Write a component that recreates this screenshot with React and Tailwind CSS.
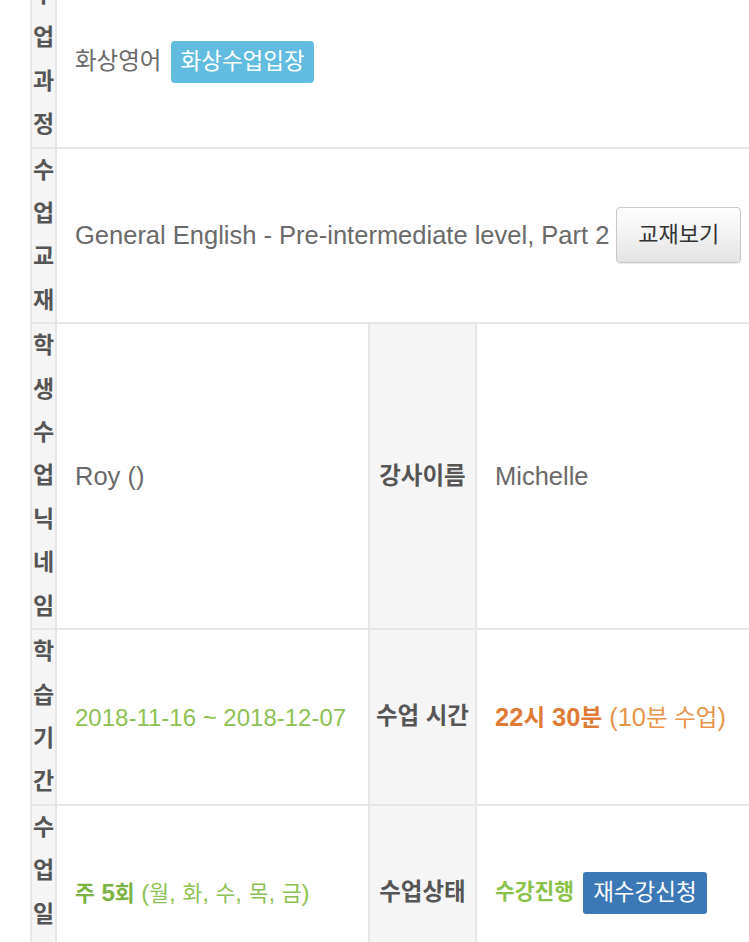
const K = ({ children, className = "" }) => (
  <span className={"text-[23.5px] " + className}>{children}</span>
);

const S = ({ children, className = "" }) => (
  <span className={"text-[21.5px] " + className}>{children}</span>
);

function Th({ children }) {
  return (
    <th className="border-2 border-[#e6e6e6] bg-[#f5f5f5] p-0 text-center align-middle font-bold text-[23px] leading-[43.4px] text-[#555] break-all">
      {children}
    </th>
  );
}

function Label({ children }) {
  return (
    <th className="border-2 border-[#e6e6e6] bg-[#f5f5f5] p-0 text-center align-middle font-bold text-[23.5px] text-[#555] whitespace-nowrap">
      {children}
    </th>
  );
}

function Td({ children, colSpan }) {
  return (
    <td colSpan={colSpan} className="border-2 border-[#e6e6e6] pl-[18px] pr-2 align-middle">
      {children}
    </td>
  );
}

export default function App() {
  return (
    <div className="w-[749px] h-[942px] overflow-hidden bg-white font-['Liberation_Sans','Noto_Sans_CJK_KR',sans-serif] text-[25.5px] text-[#6a6a6a]">
      <table className="table-fixed border-collapse ml-[30px] -mt-[29px] w-[760px]">
        <colgroup>
          <col className="w-[25px]" />
          <col className="w-[313px]" />
          <col className="w-[107px]" />
          <col />
        </colgroup>
        <tbody>
          <tr>
            <Th>수업과정</Th>
            <Td colSpan={3}>
              <div className="flex items-center gap-[10px] pt-[4px]">
                <K>화상영어</K>
                <span className="rounded-[4px] bg-[#62bcdf] px-[9px] py-[5px] text-[22.5px] leading-[32px] text-white">
                  화상수업입장
                </span>
              </div>
            </Td>
          </tr>
          <tr>
            <Th>수업교재</Th>
            <Td colSpan={3}>
              <div className="flex items-center gap-[7px] whitespace-nowrap">
                <span>General English - Pre-intermediate level, Part 2</span>
                <span className="rounded-[4px] border border-[#c8c8c8] bg-gradient-to-b from-white to-[#e4e4e4] px-[21px] py-[12px] text-[22px] leading-[30px] text-[#333] shadow-[0_1px_1px_rgba(0,0,0,0.08)]">
                  교재보기
                </span>
              </div>
            </Td>
          </tr>
          <tr>
            <Th>학생수업닉네임</Th>
            <Td>Roy ()</Td>
            <Label>강사이름</Label>
            <Td>Michelle</Td>
          </tr>
          <tr>
            <Th>학습기간</Th>
            <Td>
              <span className="text-[24px] text-[#8dc153]">2018-11-16 ~ 2018-12-07</span>
            </Td>
            <Label>수업 시간</Label>
            <Td>
              <span className="whitespace-nowrap">
                <span className="font-bold text-[#df7b34]">
                  22<K>시</K> 30<K>분</K>
                </span>{" "}
                <span className="text-[#e8954c]">
                  (10<K>분 수업</K>)
                </span>
              </span>
            </Td>
          </tr>
          <tr>
            <Th>수업일자</Th>
            <Td>
              <span className="whitespace-nowrap text-[24px]">
                <span className="font-bold text-[#7cb342]">
                  <S>주</S> 5<S>회</S>
                </span>{" "}
                <span className="text-[#8dc153]">
                  (<S>월</S>, <S>화</S>, <S>수</S>, <S>목</S>, <S>금</S>)
                </span>
              </span>
            </Td>
            <Label>수업상태</Label>
            <Td>
              <div className="flex items-center gap-[9px]">
                <S className="font-bold text-[#8bc34a]">수강진행</S>
                <span className="rounded-[3px] bg-[#3b78b5] px-[10px] py-[5px] text-[22.5px] leading-[32px] text-white">
                  재수강신청
                </span>
              </div>
            </Td>
          </tr>
        </tbody>
      </table>
    </div>
  );
}
